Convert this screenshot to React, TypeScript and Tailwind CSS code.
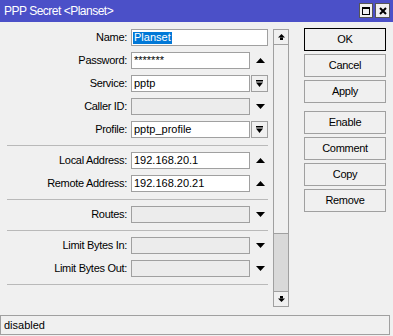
import React from 'react';

type Kind = 'none' | 'up' | 'down' | 'select';

interface Row {
  label: string;
  value?: string;
  kind: Kind;
  disabled?: boolean;
  selected?: boolean;
}

const groups: Row[][] = [
  [
    { label: 'Name:', value: 'Planset', kind: 'none', selected: true },
    { label: 'Password:', value: '*******', kind: 'up' },
    { label: 'Service:', value: 'pptp', kind: 'select' },
    { label: 'Caller ID:', kind: 'down', disabled: true },
    { label: 'Profile:', value: 'pptp_profile', kind: 'select' },
  ],
  [
    { label: 'Local Address:', value: '192.168.20.1', kind: 'up' },
    { label: 'Remote Address:', value: '192.168.20.21', kind: 'up' },
  ],
  [{ label: 'Routes:', kind: 'down', disabled: true }],
  [
    { label: 'Limit Bytes In:', kind: 'down', disabled: true },
    { label: 'Limit Bytes Out:', kind: 'down', disabled: true },
  ],
];

const buttons = [['OK', 'Cancel', 'Apply'], ['Enable', 'Comment', 'Copy', 'Remove']];

function UpTri() {
  return (
    <svg width="9" height="5" viewBox="0 0 9 5">
      <polygon points="4.5,0 9,5 0,5" fill="#000" />
    </svg>
  );
}

function DownTri() {
  return (
    <svg width="9" height="5" viewBox="0 0 9 5">
      <polygon points="0,0 9,0 4.5,5" fill="#000" />
    </svg>
  );
}

function SelectIcon() {
  return (
    <svg width="7" height="7" viewBox="0 0 7 7">
      <rect x="0" y="0" width="7" height="1.5" fill="#000" />
      <polygon points="0,2.5 7,2.5 3.5,7" fill="#000" />
    </svg>
  );
}

function ScrollArrow({ down }: { down?: boolean }) {
  return (
    <svg width="7" height="6" viewBox="0 0 7 6" className={down ? 'rotate-180' : ''}>
      <polygon points="3.5,0 7,3.5 0,3.5" fill="#000" />
      <rect x="2" y="3.5" width="3" height="2.5" fill="#000" />
    </svg>
  );
}

function FormRow({ row }: { row: Row }) {
  const wide = row.kind === 'none';
  return (
    <div className="flex items-center h-[17px]">
      <div className="w-[127px] text-right text-[11px] tracking-[-0.3px] text-black leading-none">
        {row.label}
      </div>
      <div
        className={`ml-[4px] h-[17px] border border-[#a0a0a0] flex items-center px-[1px] text-[11px] leading-none text-black ${
          wide ? 'w-[137px]' : 'w-[119px]'
        } ${row.disabled ? 'bg-[#ececec]' : 'bg-white'}`}
      >
        {row.selected ? (
          <span className="bg-[#0078d7] text-white h-[12px] flex items-center pl-[1px] pr-[1px]">
            {row.value}
          </span>
        ) : (
          <span className="pl-[1px]">{row.value}</span>
        )}
      </div>
      {row.kind === 'up' && (
        <div className="ml-[1px] w-[17px] h-[17px] flex items-center justify-center pl-[2px]">
          <UpTri />
        </div>
      )}
      {row.kind === 'down' && (
        <div className="ml-[1px] w-[17px] h-[17px] flex items-center justify-center pl-[2px]">
          <DownTri />
        </div>
      )}
      {row.kind === 'select' && (
        <div className="ml-[1px] w-[17px] h-[17px] border border-[#a0a0a0] bg-[#f0f0f0] flex items-center justify-center">
          <SelectIcon />
        </div>
      )}
    </div>
  );
}

export default function App() {
  return (
    <div className="w-[393px] h-[336px] bg-[#f0f0f0] flex flex-col overflow-hidden font-['Liberation_Sans',Arial,sans-serif]">
      <div className="h-[22px] bg-[#4b50c8] flex items-center justify-between pl-[4px] pr-[3px]">
        <span className="text-white text-[12px] tracking-[-0.5px] leading-none">PPP Secret &lt;Planset&gt;</span>
        <div className="flex gap-[2px] mt-[-1px]">
          <div className="w-[14px] h-[15px] bg-[#f0f0f0] border border-[#555] flex items-center justify-center">
            <div className="w-[8px] h-[8px] border border-black border-t-2" />
          </div>
          <div className="w-[15px] h-[15px] bg-[#f0f0f0] border border-[#555] flex items-center justify-center">
            <svg width="8" height="8" viewBox="0 0 8 8">
              <path d="M1 1 L7 7 M7 1 L1 7" stroke="#000" strokeWidth="2" />
            </svg>
          </div>
        </div>
      </div>

      <div className="flex flex-1">
        <div className="w-[268px] pt-[7px] flex flex-col">
          {groups.map((group, gi) => (
            <div key={gi} className="flex flex-col">
              <div className="flex flex-col gap-[6px]">
                {group.map((row) => (
                  <FormRow key={row.label} row={row} />
                ))}
              </div>
              <div className="ml-[7px] w-[261px] h-px bg-[#b9b9b9] mt-[7px] mb-[6px]" />
            </div>
          ))}
        </div>

        <div className="ml-[5px] mt-[7px] w-[16px] h-[278px] border border-[#a0a0a0] flex flex-col">
          <div className="h-[15px] border-b border-[#a0a0a0] bg-[#f0f0f0] flex items-center justify-center">
            <ScrollArrow />
          </div>
          <div className="h-[189px] bg-[#f0f0f0] border-b border-[#a0a0a0]" />
          <div className="flex-1 bg-[#d9d9d9]" />
          <div className="h-[15px] border-t border-[#a0a0a0] bg-[#f0f0f0] flex items-center justify-center">
            <ScrollArrow down />
          </div>
        </div>

        <div className="ml-[15px] mt-[6px] w-[82px] flex flex-col gap-[8px]">
          {buttons.map((set, si) => (
            <div key={si} className="flex flex-col gap-[3px]">
              {set.map((b) => (
                <div
                  key={b}
                  className={`h-[23px] flex items-center justify-center text-[11px] tracking-[-0.3px] text-black bg-[#f0f0f0] border ${
                    b === 'OK' ? 'border-black' : 'border-[#a0a0a0]'
                  }`}
                >
                  {b}
                </div>
              ))}
            </div>
          ))}
        </div>
      </div>

      <div className="mb-[1px] w-[390px] h-[20px] border border-[#a0a0a0] flex items-center pl-[3px] text-[11px] text-black leading-none">
        disabled
      </div>
    </div>
  );
}
